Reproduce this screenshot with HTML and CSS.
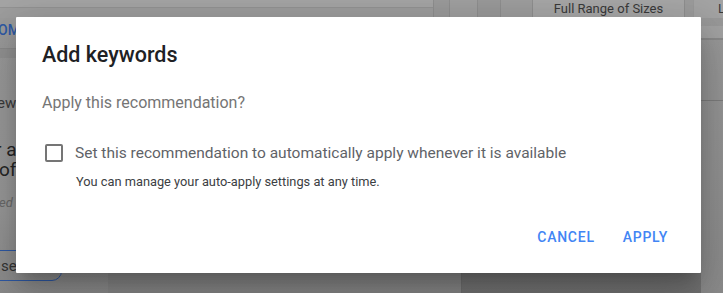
FILE: index.html
```html
<!DOCTYPE html>
<html>
<head>
<meta charset="utf-8">
<link rel="stylesheet" href="styles.css">
</head>
<body>
<div class="page">
  <div class="topbar">
    <div class="tb-fill"></div>
    <div class="tb-cell tb-c1"></div>
    <div class="tb-cell tb-c2"></div>
    <div class="tb-cell tb-c3"></div>
    <div class="tb-cell tb-c4"></div>
    <div class="tb-cell tb-size">Full Range of Sizes</div>
    <div class="tb-cell tb-c5"></div>
    <div class="tb-cell tb-last">L</div>
  </div>
  <div class="main">
    <div class="leftcol">
      <div class="lc-link">OMMENDATIONS</div>
      <div class="lc-band"></div>
      <div class="lc-text">ewed</div>
      <div class="lc-big">r ad</div>
      <div class="lc-big lc-big2">off</div>
      <div class="lc-ital">ed</div>
      <div class="lc-btn">se</div>
    </div>
    <div class="center-a"></div>
    <div class="center-b"></div>
    <div class="rightcol">
      <div class="rc-band"></div>
      <div class="rc-line"></div>
    </div>
  </div>
</div>

<div class="dialog">
  <h2 class="title">Add keywords</h2>
  <p class="question">Apply this recommendation?</p>
  <label class="check-row">
    <span class="box"></span>
    <span class="check-label">Set this recommendation to automatically apply whenever it is available</span>
  </label>
  <p class="hint">You can manage your auto-apply settings at any time.</p>
  <div class="actions">
    <button class="btn">Cancel</button>
    <button class="btn">Apply</button>
  </div>
</div>
</body>
</html>
```
FILE: styles.css
```css
html, body {
  margin: 0;
  padding: 0;
}
body {
  width: 723px;
  height: 293px;
  overflow: hidden;
  position: relative;
  font-family: Roboto, "Liberation Sans", sans-serif;
  background: #999;
}
.page {
  display: flex;
  flex-direction: column;
  height: 293px;
}
.topbar {
  display: flex;
  height: 18px;
  flex: 0 0 18px;
  background: #9e9e9e;
  box-shadow: inset 0 7px 0 #a5a5a5, inset 0 8px 0 #939393;
}
.tb-fill { flex: 0 0 433px; }
.tb-cell {
  border-left: 1px solid #8f8f8f;
  font-size: 13px;
  color: #3a3a3a;
  line-height: 18px;
  box-sizing: border-box;
}
.tb-c1 { flex: 0 0 16px; background: #9b9b9b; }
.tb-c2 { flex: 0 0 28px; background: #a0a0a0; }
.tb-c3 { flex: 0 0 23px; background: #9a9a9a; }
.tb-c4 { flex: 0 0 32px; background: #9e9e9e; }
.tb-size {
  flex: 0 0 153px;
  background: #a7a7a7;
  text-align: center;
  border-right: 1px solid #8f8f8f;
}
.tb-c5 { flex: 0 0 8px; background: #9c9c9c; border-left: 0; }
.tb-last {
  flex: 1;
  border-left: 1px solid #999;
  padding-left: 24px;
  background: #a4a4a4;
}
.main {
  flex: 1;
  display: flex;
}
.leftcol {
  flex: 0 0 80px;
  display: flex;
  flex-direction: column;
  background: linear-gradient(#9c9c9c 0%, #9a9a9a 70%, #8c8c8c 100%);
}
.lc-link {
  margin: 3px 0 0 -2px;
  font-size: 14px;
  font-weight: 500;
  color: #2f5aa6;
  line-height: 18px;
  white-space: nowrap;
}
.lc-band {
  margin-top: 9px;
  height: 9px;
  background: #939393;
  border-top: 1px solid #8c8c8c;
}
.lc-text {
  margin: 36px 0 0 -3px;
  font-size: 15px;
  color: #3a3a3a;
  line-height: 18px;
}
.lc-big {
  margin: 28px 0 0 -5px;
  font-size: 19px;
  color: #262626;
  line-height: 20px;
}
.lc-big2 { margin-top: 0; margin-left: -1px; }
.lc-ital {
  margin: 15px 0 0 -1px;
  font-size: 13px;
  font-style: italic;
  color: #6a6a6a;
  line-height: 16px;
}
.lc-btn {
  margin: 39px 0 0 -30px;
  height: 31px;
  width: 92px;
  border: 1.5px solid #2f5aa6;
  border-radius: 0 0 10px 0;
  box-sizing: border-box;
  padding-left: 30px;
  font-size: 15px;
  line-height: 30px;
  color: #353535;
}
.center-a {
  flex: 0 0 353px;
  background: linear-gradient(#9a9a9a, #878787);
}
.center-b {
  flex: 1;
  border-left: 1px solid #6f6f6f;
  background: linear-gradient(#939393, #737373);
}
.rightcol {
  flex: 0 0 22px;
  background: linear-gradient(#9a9a9a, #8c8c8c);
  display: flex;
  flex-direction: column;
}
.rc-band {
  margin-top: 8px;
  height: 12px;
  background: #a3a3a3;
  border-bottom: 2px solid #8a8a8a;
}
.rc-line {
  margin-top: 60px;
  height: 1px;
  background: #7d7d7d;
}

.dialog {
  position: absolute;
  left: 16px;
  top: 17px;
  width: 685px;
  height: 256px;
  box-sizing: border-box;
  background: #fff;
  border-radius: 1px;
  padding: 23px 26px 0 26px;
  box-shadow: 0 11px 15px -7px rgba(0,0,0,.2), 0 24px 38px 3px rgba(0,0,0,.14), 0 9px 46px 8px rgba(0,0,0,.12);
  display: flex;
  flex-direction: column;
}
.title {
  margin: 0;
  font-size: 21.5px;
  font-weight: 500;
  line-height: 30px;
  color: #202124;
}
.question {
  margin: 23px 0 0 0;
  font-size: 16px;
  line-height: 20px;
  color: #757575;
}
.check-row {
  margin-top: 30px;
  display: flex;
  align-items: center;
  gap: 12px;
  padding-left: 3px;
}
.box {
  width: 18px;
  height: 18px;
  box-sizing: border-box;
  border: 2px solid #757575;
  border-radius: 2px;
  flex: 0 0 18px;
}
.check-label {
  font-size: 15.5px;
  line-height: 20px;
  color: #5f6368;
}
.hint {
  margin: 11px 0 0 34px;
  font-size: 12.8px;
  line-height: 16px;
  color: #3c4043;
}
.actions {
  margin-top: 29px;
  margin-right: -2px;
  display: flex;
  justify-content: flex-end;
  gap: 10px;
}
.btn {
  border: 0;
  background: none;
  padding: 0 9px;
  height: 36px;
  font-family: Roboto, "Liberation Sans", sans-serif;
  font-size: 14px;
  font-weight: 500;
  letter-spacing: 0.75px;
  text-transform: uppercase;
  color: #4285f4;
}
```
